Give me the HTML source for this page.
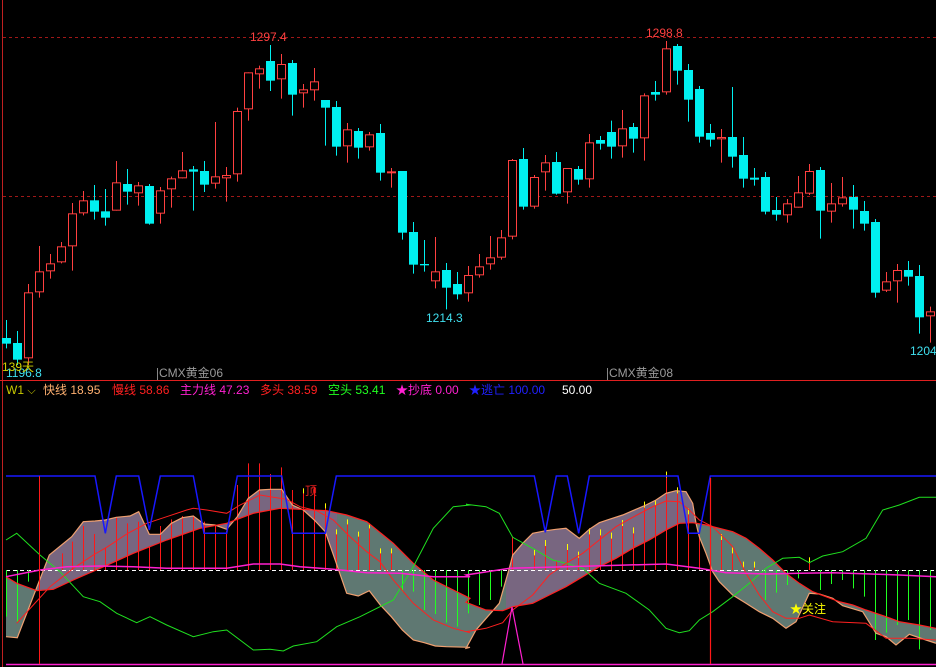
<!DOCTYPE html>
<html><head><meta charset="utf-8">
<style>
html,body{margin:0;padding:0;background:#000;width:936px;height:667px;overflow:hidden}
svg{position:absolute;left:0;top:0}
.t{position:absolute;font-family:"Liberation Sans","Noto Sans CJK SC",sans-serif;font-size:12px;white-space:nowrap;line-height:14px}
</style></head><body>
<svg id="s" width="936" height="667" xmlns="http://www.w3.org/2000/svg">
<defs>
<clipPath id="cp"><rect x="37" y="440" width="300" height="230"/><rect x="506" y="440" width="190" height="230"/></clipPath>
</defs>
<line x1="2.5" y1="0" x2="2.5" y2="667" stroke="#c02020" stroke-width="1"/>
<line x1="3" y1="37.5" x2="936" y2="37.5" stroke="#a01818" stroke-dasharray="3,3"/>
<line x1="3" y1="196.5" x2="936" y2="196.5" stroke="#a01818" stroke-dasharray="3,3"/>
<line x1="0" y1="380.5" x2="936" y2="380.5" stroke="#e02020"/>
<line x1="157.5" y1="368" x2="157.5" y2="380" stroke="#888"/>
<line x1="607.5" y1="368" x2="607.5" y2="380" stroke="#888"/>
<g id="candles"></g>
<g id="low"></g>
</svg>
<div class="t" style="left:250px;top:30px;color:#ff4040">1297.4</div>
<div class="t" style="left:646px;top:26px;color:#ff4040">1298.8</div>
<div class="t" style="left:426px;top:311px;color:#40e0f0">1214.3</div>
<div class="t" style="left:910px;top:344px;color:#40e0f0">1204</div>
<div class="t" style="left:6px;top:366px;color:#40e0f0">1196.8</div>
<div class="t" style="left:2px;top:360px;color:#d0d000">139天</div>
<div class="t" style="left:159px;top:366px;color:#9a9a9a">CMX黄金06</div>
<div class="t" style="left:609px;top:366px;color:#9a9a9a">CMX黄金08</div>
<div class="t" style="left:6px;top:383px;color:#c8c800">W1 <span style="font-size:11px">⌵</span></div>
<div class="t" style="left:43px;top:383px;color:#ffb070">快线 18.95</div>
<div class="t" style="left:112px;top:383px;color:#ff2020">慢线 58.86</div>
<div class="t" style="left:180px;top:383px;color:#ff20d0">主力线 47.23</div>
<div class="t" style="left:260px;top:383px;color:#ff2020">多头 38.59</div>
<div class="t" style="left:328px;top:383px;color:#20ff20">空头 53.41</div>
<div class="t" style="left:396px;top:383px;color:#ff20d0">★抄底 0.00</div>
<div class="t" style="left:469px;top:383px;color:#2020ff">★逃亡 100.00</div>
<div class="t" style="left:562px;top:383px;color:#ffffff">50.00</div>
<div class="t" style="left:305px;top:484px;color:#e02020">顶</div>
<div class="t" style="left:790px;top:602px;color:#ffff00">★关注</div>
<script>
var NS="http://www.w3.org/2000/svg";
function el(p,tag,a){var e=document.createElementNS(NS,tag);for(var k in a)e.setAttribute(k,a[k]);p.appendChild(e);return e;}
var cg=document.getElementById('candles');
var C=[["c",870,924,941,955],["c",903,939,989,1005],["r",762,787,985,1005],["r",648,724,787,803],["r",672,700,724,746],["r",636,649,697,700],["r",519,550,649,722],["r",483,511,550,556],["c",465,511,545,569],["c",477,544,563,587],["r",393,457,542,542],["c",417,462,485,524],["r",456,466,490,527],["c",462,468,581,584],["r",471,481,551,581],["r",440,445,478,533],["r",366,421,445,445],["c",408,418,425,542],["c",393,423,464,486],["r",276,439,461,476],["r",411,435,445,515],["r",233,243,433,455],["r",127,127,238,272],["r",107,115,133,176],["c",45,93,152,183],["r",72,102,148,206],["c",90,99,194,257],["r",162,178,190,233],["r",114,154,181,212],["c",210,210,233,347],["c",213,231,350,377],["r",279,298,349,398],["c",294,303,353,386],["r",306,313,352,362],["c",282,309,428,452],["r",414,424,428,473],["c",423,423,608,629],["c",576,606,704,731],["c",630,702,706,725],["r",621,724,754,775],["c",699,720,773,838],["c",726,762,793,808]];
var D=[["r",708,735,790,815],["r",672,709,736,743],["r",618,682,703,719],["r",600,622,683,689],["r",387,390,620,628],["c",354,387,530,539],["r",435,441,530,536],["r",375,397,427,482],["c",366,396,491,494],["r",414,414,487,521],["c",408,417,449,464],["r",312,337,448,473],["c",318,330,341,359],["c",272,306,350,386],["r",240,295,349,383],["c",279,291,326,368],["r",190,196,325,392],["c",153,186,194,212],["r",33,55,187,194],["c",42,48,122,164],["c",102,120,209,275],["c",168,177,320,338],["c",282,309,329,350],["r",297,321,328,398],["c",171,321,380,413],["c",321,375,446,473],["c",414,443,449,467],["c",426,441,545,553],["c",501,540,554,572],["r",507,520,556,578],["r",438,487,533,533],["r",402,423,491,495],["c",411,420,542,626],["r",459,520,545,578],["r",441,502,523,530],["c",465,501,539,596],["c",513,543,581,602],["c",567,576,788,803],["r",726,754,782,786],["r",702,720,754,818],["c",693,720,740,767],["c",705,738,862,911],["r",830,844,859,938]];
function drawC(arr,x0){arr.forEach(function(c,i){var x=Math.round(x0+11*i);var y=function(v){return v/3+30};
 var col=c[0]=="r"?"#ff4040":"#00f0f0";
 el(cg,"line",{x1:x+.5,x2:x+.5,y1:y(c[1]),y2:y(c[4]),stroke:col});
 var h=Math.max(1,y(c[3])-y(c[2]));
 if(c[0]=="r") el(cg,"rect",{x:x-3.5,y:y(c[2])+.5,width:8,height:Math.max(1,h-1),fill:"#000",stroke:col});
 else el(cg,"rect",{x:x-4,y:y(c[2]),width:9,height:h,fill:col});
});}
drawC(C,6);drawC(D,468);
var g=document.getElementById('low');
function P(l,r){var s=[];l.forEach(function(p){s.push((p[0]/3).toFixed(1)+","+(440+p[1]/3).toFixed(1))});r.forEach(function(p){s.push((466+p[0]/3).toFixed(1)+","+(440+p[1]/3).toFixed(1))});return s;}
var Al=[[18,590],[52,593],[148,345],[215,290],[250,245],[285,243],[316,240],[349,232],[390,228],[416,215],[448,283],[481,283],[514,250],[547,233],[580,228],[612,252],[645,255],[680,268],[712,230],[745,175],[778,150],[811,148],[845,148],[877,195],[910,210],[943,240],[976,275],[1009,370],[1040,460],[1075,468],[1108,452],[1141,495],[1174,530],[1207,570],[1240,600],[1273,608],[1306,618],[1339,620],[1410,622]];
var Ar=[[0,625],[30,570],[100,490],[130,385],[140,345],[170,310],[200,280],[240,272],[270,268],[300,265],[340,295],[370,268],[400,248],[430,238],[470,225],[500,212],[540,195],[570,180],[600,160],[630,152],[660,155],[680,190],[690,250],[700,290],[720,340],[740,395],[760,425],[800,465],[840,490],[880,515],[920,535],[960,565],[990,545],[1030,460],[1060,462],[1100,475],[1130,497],[1190,515],[1230,580],[1260,590],[1290,615],[1330,583],[1380,600],[1410,610]];
var Bl=[[18,410],[50,430],[110,452],[160,448],[220,420],[300,385],[400,340],[500,300],[600,265],[680,250],[760,220],[840,205],[900,208],[980,212],[1040,225],[1100,245],[1180,310],[1240,370],[1300,420],[1360,450],[1410,475]];
var Br=[[0,487],[60,510],[110,512],[140,500],[200,490],[250,465],[300,440],[350,410],[400,380],[450,355],[500,325],[550,300],[600,270],[640,250],[680,248],[720,255],[760,265],[800,275],[840,295],[880,325],[920,360],[960,400],[1000,430],[1040,455],[1080,470],[1120,485],[1160,495],[1200,510],[1260,530],[1300,545],[1360,555],[1410,565]];
var A=P(Al,Ar),B=P(Bl,Br);
var poly=A.concat(B.slice().reverse()).join(" ");
el(g,"polygon",{points:poly,fill:"#5f7872"});
el(g,"polygon",{points:poly,fill:"#786680","clip-path":"url(#cp)"});
// white dashed
el(g,"line",{x1:6,x2:936,y1:570.5,y2:570.5,stroke:"#fff","stroke-dasharray":"4,3"});
// bars
function bars(list,off,col){list.forEach(function(b){var x=Math.round(off+b[0]/3)+.5;el(g,"line",{x1:x,x2:x,y1:570,y2:440+b[1]/3,stroke:col});});}
bars([[185,340],[217,305],[250,258],[283,282],[316,322],[349,232],[382,250],[415,245],[448,318],[481,258],[514,238],[547,228],[580,230],[613,245],[646,258],[679,272],[712,135],[745,70],[778,70],[811,102],[844,82],[877,150],[910,145],[943,140],[976,190],[1009,268],[1042,238],[1075,275],[1108,250],[1141,325],[1174,325]],0,"#ff1818");
bars([[139,292],[205,328],[238,300],[271,365],[304,312],[337,335],[370,265],[403,268],[436,278],[469,240],[502,262],[535,185],[568,180],[601,95],[634,142],[667,205],[700,282],[733,282],[766,282],[799,322],[832,365],[865,365],[1030,352]],466,"#ff1818");
bars([[19,530],[52,545],[85,425],[1207,455],[1240,455],[1273,510],[1306,522],[1339,548],[1372,560],[1405,500]],0,"#20ff20");
bars([[7,520],[40,495],[73,480],[106,440],[898,480],[931,458],[964,435],[997,415],[1063,450],[1096,432],[1129,420],[1162,445],[1195,470],[1228,600],[1261,578],[1294,555],[1327,540],[1360,628],[1393,570]],466,"#20ff20");
// yellow tips
[[910,145],[976,190],[1009,268],[1042,238],[1075,275],[1108,250],[1141,325],[1174,325]].forEach(function(b){var x=Math.round(b[0]/3)+.5;el(g,"line",{x1:x,x2:x,y1:440+b[1]/3,y2:440+b[1]/3+5,stroke:"#ffff00"});});
[[205,328],[238,300],[304,312],[337,335],[370,265],[403,268],[436,278],[469,240],[502,262],[535,185],[568,180],[601,95],[634,142],[667,205],[733,282],[766,282],[799,322],[832,365],[865,365],[1030,352]].forEach(function(b){var x=Math.round(466+b[0]/3)+.5;el(g,"line",{x1:x,x2:x,y1:440+b[1]/3,y2:440+b[1]/3+6,stroke:"#ffff00"});});
// lines
function pl(l,r,col,w){el(g,"polyline",{points:P(l,r).join(" "),fill:"none",stroke:col,"stroke-width":w||1});}
pl(Al,Ar,"#f0a070",1.2);pl(Bl,Br,"#ff2020",1.2);
pl([[18,300],[50,280],[120,345],[180,395],[250,470],[300,485],[350,520],[410,548],[450,530],[500,555],[580,590],[640,575],[680,570],[760,630],[810,628],[850,633],[880,618],[950,605],[1010,560],[1080,530],[1180,480],[1240,380],[1300,265],[1360,200],[1410,195]],[[0,193],[60,200],[100,220],[140,292],[200,325],[260,360],[300,370],[350,385],[400,430],[480,460],[550,510],[600,565],[640,578],[670,572],[700,540],[740,515],[800,470],[850,430],[900,385],[950,355],[1000,352],[1030,368],[1070,348],[1130,335],[1200,295],[1250,210],[1300,195],[1360,172],[1410,172]],"#20e020");
pl([[50,550],[100,495],[150,440],[220,385],[280,345],[320,322],[380,282],[440,250],[500,230],[560,210],[580,205],[620,210],[680,220],[720,195],[780,165],[820,172],[860,178],[900,200],[950,212],[1000,240],[1050,290],[1100,335],[1140,365],[1180,420],[1240,490],[1300,540],[1360,565],[1410,578]],[[0,575],[60,565],[110,548],[140,510],[200,465],[250,405],[300,370],[350,340],[400,300],[450,260],[500,232],[560,200],[600,183],[640,185],[670,210],[700,240],[740,260],[800,320],[840,400],[880,465],[920,515],[960,535],[1000,535],[1030,525],[1100,545],[1200,550],[1260,595],[1330,595],[1410,600]],"#ff2020");
pl([[18,410],[120,390],[200,380],[300,378],[400,380],[500,385],[680,385],[760,372],[840,372],[900,380],[1000,388],[1100,398],[1200,400],[1300,410],[1410,410]],[[0,405],[130,385],[300,380],[600,372],[700,385],[780,398],[900,402],[1000,400],[1100,398],[1300,405],[1410,410]],"#ff20d0",1.5);
// blue
pl([[18,108],[285,108],[316,280],[349,108],[416,108],[448,270],[481,108],[580,108],[612,280],[680,280],[712,108],[845,108],[877,280],[976,280],[1009,108],[1410,108]],[[0,108],[205,108],[238,277],[271,108],[304,108],[338,280],[370,108],[636,108],[667,280],[700,280],[733,108],[1410,108]],"#1818ff",1.5);
// magenta bottom & spike
el(g,"line",{x1:6,x2:936,y1:664.5,y2:664.5,stroke:"#ff20d0","stroke-width":1.5});
el(g,"polyline",{points:"502,664 512,607 523,664",fill:"none",stroke:"#ff20d0","stroke-width":1.2});
// verticals
el(g,"line",{x1:39.5,x2:39.5,y1:476,y2:664,stroke:"#ff1818"});
el(g,"line",{x1:710.5,x2:710.5,y1:478,y2:664,stroke:"#ff1818","stroke-width":1.2});
</script>
</body></html>
